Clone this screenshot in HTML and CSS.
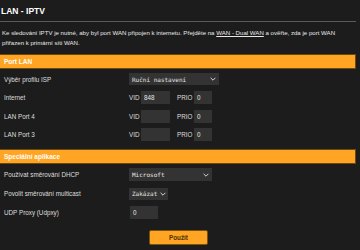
FILE: index.html
```html
<!DOCTYPE html>
<html lang="cs">
<head>
  <meta charset="UTF-8">
  <meta name="viewport" content="width=device-width, initial-scale=1.0">
  <title>LAN - IPTV</title>
  <link rel="stylesheet" href="styles.css">
</head>
<body>
  <div class="page">
    <h1 class="title">LAN - IPTV</h1>
    <p class="intro">Ke sledování IPTV je nutné, aby byl port WAN připojen k internetu. Přejděte na <a href="#">WAN - Dual WAN</a> a ověřte, zda je port WAN přiřazen k primární síti WAN.</p>

    <div class="bar">Port LAN</div>
    <div class="rows">
      <div class="row">
        <div class="label">Výběr profilu ISP</div>
        <div class="pick pick-isp">
          <span>Ruční nastavení</span>
          <svg class="chev" viewBox="0 0 10 6"><path d="M1 1l4 4 4-4" fill="none" stroke="#ddd" stroke-width="1.6"/></svg>
        </div>
      </div>
      <div class="row">
        <div class="label">Internet</div>
        <span class="tag">VID</span><input class="vid" value="848">
        <span class="tag prio">PRIO</span><input class="num" value="0">
      </div>
      <div class="row">
        <div class="label">LAN Port 4</div>
        <span class="tag">VID</span><input class="vid" value="">
        <span class="tag prio">PRIO</span><input class="num" value="0">
      </div>
      <div class="row">
        <div class="label">LAN Port 3</div>
        <span class="tag">VID</span><input class="vid" value="">
        <span class="tag prio">PRIO</span><input class="num" value="0">
      </div>
    </div>

    <div class="bar bar-two">Speciální aplikace</div>
    <div class="rows rows-two">
      <div class="row">
        <div class="label">Používat směrování DHCP</div>
        <div class="pick pick-ms">
          <span>Microsoft</span>
          <svg class="chev" viewBox="0 0 10 6"><path d="M1 1l4 4 4-4" fill="none" stroke="#ddd" stroke-width="1.6"/></svg>
        </div>
      </div>
      <div class="row">
        <div class="label">Povolit směrování multicast</div>
        <div class="pick pick-off">
          <span>Zakázat</span>
          <svg class="chev" viewBox="0 0 10 6"><path d="M1 1l4 4 4-4" fill="none" stroke="#ddd" stroke-width="1.6"/></svg>
        </div>
      </div>
      <div class="row">
        <div class="label">UDP Proxy (Udpxy)</div>
        <input class="udp" value="0">
      </div>
    </div>

    <div class="actions">
      <button type="button">Použít</button>
    </div>
  </div>
</body>
</html>
```

FILE: styles.css
```css
body { margin: 0; background: #1c1c1c; font-family: "Liberation Sans", Arial, sans-serif; color: #e6e6e6; }
.page { width: 356px; padding-top: 6px; }
.title { margin: 0 0 0 1px; font-size: 8.5px; font-weight: bold; color: #fff; line-height: 11px; }
.intro { margin: 4px 0 6px; padding: 6px 0 0 2px; border-top: 1px solid #5a5a5a; font-size: 6.1px; line-height: 10px; color: #e8e8e8; }
.intro a { color: #e8e8e8; text-decoration: underline; }
.bar { height: 13px; line-height: 13px; background: #ffa523; border: 1px solid #6b4a12; border-left: none; padding-left: 4px; font-size: 6.5px; font-weight: bold; color: #fff; }
.bar-two { margin-top: 5px; }
.rows { padding-top: 1px; }
.row { display: flex; align-items: center; height: 18.5px; }
.rows-two .row { height: 19px; }
.label { width: 125px; padding-left: 4px; font-size: 6.3px; color: #dedede; }
.tag { font-size: 6.3px; color: #dedede; width: 12px; }
.tag.prio { width: 17px; margin-left: 7px; }
input { box-sizing: border-box; height: 13px; border: none; background: #333; color: #e6e6e6; font-family: "Liberation Sans", Arial, sans-serif; font-size: 6.3px; padding: 0 3px; outline: none; }
.vid { width: 29px; }
.num { width: 18px; }
.udp { width: 28px; margin-left: 1px; }
.pick { display: flex; align-items: center; justify-content: space-between; box-sizing: border-box; height: 12px; padding: 0 3px; background: #333; color: #e6e6e6; font-family: "DejaVu Sans Mono", "Liberation Mono", monospace; font-size: 6px; white-space: nowrap; }
.pick-isp { width: 90px; }
.pick-ms { width: 83px; height: 13px; }
.pick-off { width: 39px; padding-right: 2px; }
.chev { width: 6px; height: 4px; flex: none; }
.actions { display: flex; justify-content: center; padding: 8px 0 0 0; }
button { width: 59px; height: 15px; background: #ffa523; border: 1px solid #7a5212; border-radius: 2px; font-family: "Liberation Sans", Arial, sans-serif; font-size: 6.3px; font-weight: bold; color: #4a3006; cursor: pointer; margin-left: 1px; }
```
